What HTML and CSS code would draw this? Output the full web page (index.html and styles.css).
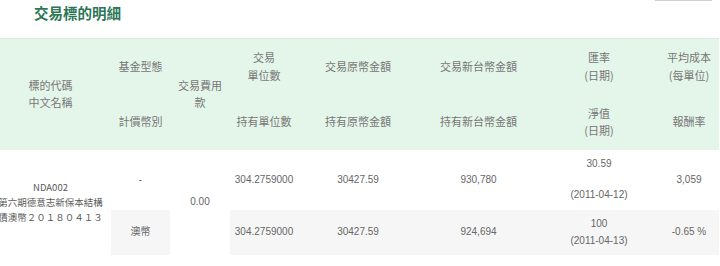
FILE: index.html
```html
<!DOCTYPE html>
<html lang="zh-Hant">
<head>
<meta charset="utf-8">
<link rel="stylesheet" href="styles.css">
</head>
<body>
<div class="top">
  <h2 class="title">交易標的明細</h2>
  <div class="btn-edge"></div>
</div>
<table class="detail">
  <colgroup>
    <col class="c1"><col class="c2"><col class="c3"><col class="c4">
    <col class="c5"><col class="c6"><col class="c7"><col class="c8">
  </colgroup>
  <thead>
    <tr class="h1">
      <th rowspan="2">標的代碼<br>中文名稱</th>
      <th>基金型態</th>
      <th rowspan="2">交易費用<br>款</th>
      <th>交易<br>單位數</th>
      <th>交易原幣金額</th>
      <th>交易新台幣金額</th>
      <th>匯率<br>(日期)</th>
      <th>平均成本<br>(每單位)</th>
    </tr>
    <tr class="h2">
      <th>計價幣別</th>
      <th>持有單位數</th>
      <th>持有原幣金額</th>
      <th>持有新台幣金額</th>
      <th>淨值<br>(日期)</th>
      <th>報酬率</th>
    </tr>
  </thead>
  <tbody>
    <tr class="r1">
      <td rowspan="2" class="name">NDA002<br>第六期德意志新保本結構<br>債澳幣２０１８０４１３</td>
      <td>-</td>
      <td rowspan="2" class="plain">0.00</td>
      <td>304.2759000</td>
      <td>30427.59</td>
      <td>930,780</td>
      <td class="rate">30.59<br><br>(2011-04-12)</td>
      <td>3,059</td>
    </tr>
    <tr class="r2">
      <td>澳幣</td>
      <td>304.2759000</td>
      <td>30427.59</td>
      <td>924,694</td>
      <td class="nav">100<br>(2011-04-13)</td>
      <td>-0.65 %</td>
    </tr>
  </tbody>
</table>
</body>
</html>
```

FILE: styles.css
```css
html, body {
  margin: 0;
  padding: 0;
  background: #ffffff;
  overflow: hidden;
}

body {
  width: 720px;
  height: 266px;
  font-family: "Noto Sans CJK TC", "Noto Sans", sans-serif;
}

.top {
  display: flex;
  justify-content: space-between;
  align-items: flex-start;
  height: 38px;
}

.title {
  margin: 4px 0 0 34px;
  font-size: 14.5px;
  line-height: 18px;
  font-weight: 700;
  color: #2c7656;
}

.btn-edge {
  width: 57px;
  height: 1px;
  margin-right: 8px;
  background: #d0d0d0;
}

.detail {
  table-layout: fixed;
  border-collapse: collapse;
  width: 729px;
  margin-left: -10px;
}

.c1 { width: 121px; }
.c2 { width: 59px; }
.c3 { width: 60px; }
.c4 { width: 68px; }
.c5 { width: 120px; }
.c6 { width: 121px; }
.c7 { width: 120px; }
.c8 { width: 60px; }

.detail thead {
  background: #e4f5ea;
  border-top: 1px solid #d8eee0;
}

.detail th {
  padding: 0;
  font-weight: 400;
  font-size: 11px;
  line-height: 17.5px;
  color: #777777;
  text-align: center;
  vertical-align: middle;
}

.h1 { height: 56px; }
.h2 { height: 55px; }

.detail td {
  padding: 0;
  font-family: "Liberation Sans", "Noto Sans CJK TC", sans-serif;
  font-size: 10px;
  line-height: 15.5px;
  color: #666666;
  text-align: center;
  vertical-align: middle;
  white-space: nowrap;
}

.detail td.name {
  font-family: "Noto Sans CJK TC", sans-serif;
  font-size: 9.5px;
  line-height: 15px;
  color: #5a5a5a;
}

.r1 { height: 60px; }
.r2 { height: 45px; }

.r2 td {
  background: #f6f6f6;
}

.detail td.nav {
  line-height: 17px;
}
```
